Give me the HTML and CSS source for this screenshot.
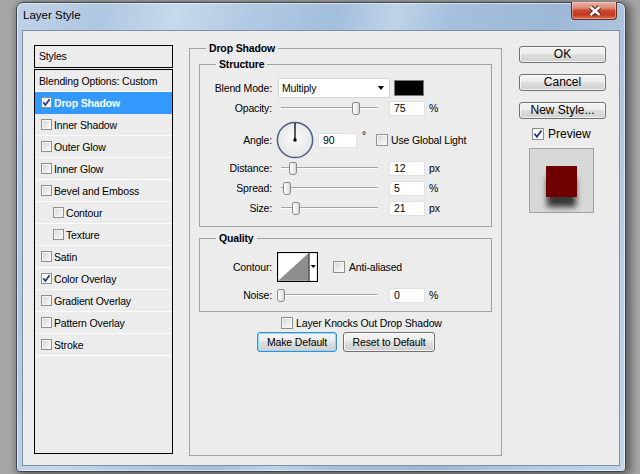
FILE: index.html
```html
<!DOCTYPE html>
<html>
<head>
<meta charset="utf-8">
<title>Layer Style</title>
<link rel="stylesheet" href="styles.css">
</head>
<body>
<div class="window">
  <div class="titlebar">
    <span class="title">Layer Style</span>
    <div class="close">
      <svg width="46" height="18" viewBox="0 0 46 18"><path d="M18.5 5 L27.5 13 M27.5 5 L18.5 13" stroke="#4a2019" stroke-width="4.4"/><path d="M18.5 5 L27.5 13 M27.5 5 L18.5 13" stroke="#ffffff" stroke-width="2.4"/></svg>
    </div>
  </div>
  <div class="client">
    <div class="styles-col">
      <div class="styles-head">Styles</div>
      <ul class="styles-list">
        <li class="row plain">Blending Options: Custom</li>
        <li class="row sel"><span class="cb small on"><svg width="9" height="9" viewBox="0 0 9 9"><path d="M1.3 4.3 L3.4 7 L7.6 1.3" fill="none" stroke="#22397f" stroke-width="1.7"/></svg></span>Drop Shadow</li>
        <li class="row"><span class="cb small"></span>Inner Shadow</li>
        <li class="row"><span class="cb small"></span>Outer Glow</li>
        <li class="row"><span class="cb small"></span>Inner Glow</li>
        <li class="row"><span class="cb small"></span>Bevel and Emboss</li>
        <li class="row indent"><span class="cb small"></span>Contour</li>
        <li class="row indent"><span class="cb small"></span>Texture</li>
        <li class="row"><span class="cb small"></span>Satin</li>
        <li class="row"><span class="cb small on"><svg width="9" height="9" viewBox="0 0 9 9"><path d="M1.3 4.3 L3.4 7 L7.6 1.3" fill="none" stroke="#22397f" stroke-width="1.7"/></svg></span>Color Overlay</li>
        <li class="row"><span class="cb small"></span>Gradient Overlay</li>
        <li class="row"><span class="cb small"></span>Pattern Overlay</li>
        <li class="row"><span class="cb small"></span>Stroke</li>
      </ul>
    </div>

    <fieldset class="group main">
      <legend>Drop Shadow</legend>
      <fieldset class="group sub structure">
        <legend>Structure</legend>
        <div class="frow r-blend">
          <span class="lbl">Blend Mode:</span>
          <div class="select"><span>Multiply</span><span class="arrow"></span></div>
          <span class="swatch"></span>
        </div>
        <div class="frow r-opacity">
          <span class="lbl">Opacity:</span>
          <div class="slider"><span class="track"></span><span class="thumb" style="left:75px"></span></div>
          <span class="field">75</span><span class="unit">%</span>
        </div>
        <div class="frow r-angle">
          <span class="lbl">Angle:</span>
          <svg class="dial" width="38" height="38" viewBox="0 0 38 38">
            <defs><radialGradient id="dg" cx="50%" cy="45%" r="60%"><stop offset="0" stop-color="#fbfbfb"/><stop offset="1" stop-color="#e2e2e2"/></radialGradient></defs>
            <circle cx="19" cy="19" r="17.6" fill="url(#dg)" stroke="#4d5e83" stroke-width="1.5"/>
            <line x1="19" y1="19" x2="19" y2="2" stroke="#000" stroke-width="1.3"/>
            <rect x="17.5" y="17.5" width="3" height="3" fill="#000"/>
          </svg>
          <span class="field angle-field">90</span>
          <span class="deg">°</span>
          <span class="cb"></span><span class="cb-text">Use Global Light</span>
        </div>
        <div class="frow r-distance">
          <span class="lbl">Distance:</span>
          <div class="slider"><span class="track"></span><span class="thumb" style="left:12px"></span></div>
          <span class="field">12</span><span class="unit">px</span>
        </div>
        <div class="frow r-spread">
          <span class="lbl">Spread:</span>
          <div class="slider"><span class="track"></span><span class="thumb" style="left:6px"></span></div>
          <span class="field">5</span><span class="unit">%</span>
        </div>
        <div class="frow r-size">
          <span class="lbl">Size:</span>
          <div class="slider"><span class="track"></span><span class="thumb" style="left:15px"></span></div>
          <span class="field">21</span><span class="unit">px</span>
        </div>
      </fieldset>

      <fieldset class="group sub quality">
        <legend>Quality</legend>
        <div class="frow r-contour">
          <span class="lbl">Contour:</span>
          <svg class="contour" width="41" height="30" viewBox="0 0 41 30">
            <rect x="0.5" y="0.5" width="40" height="29" fill="#ffffff" stroke="#000" stroke-width="1.2"/>
            <polygon points="1.2,28.8 31.5,1.2 31.5,28.8" fill="#8e8e8e"/>
            <line x1="32" y1="0" x2="32" y2="30" stroke="#000" stroke-width="1"/>
            <polygon points="33.8,13 38.8,13 36.3,16" fill="#000"/>
          </svg>
          <span class="cb aa"></span><span class="cb-text">Anti-aliased</span>
        </div>
        <div class="frow r-noise">
          <span class="lbl">Noise:</span>
          <div class="slider"><span class="track"></span><span class="thumb" style="left:0px"></span></div>
          <span class="field">0</span><span class="unit">%</span>
        </div>
      </fieldset>

      <div class="knock"><span class="cb"></span><span class="cb-text">Layer Knocks Out Drop Shadow</span></div>
      <div class="defaults">
        <button class="btn focus make">Make Default</button>
        <button class="btn reset">Reset to Default</button>
      </div>
    </fieldset>

    <div class="right-col">
      <button class="btn big">OK</button>
      <button class="btn big">Cancel</button>
      <button class="btn big">New Style...</button>
      <div class="preview-check"><span class="cb on"><svg width="10" height="10" viewBox="0 0 10 10"><path d="M1.5 4.8 L3.9 7.8 L8.5 1.5" fill="none" stroke="#22397f" stroke-width="1.8"/></svg></span><span class="pv-text">Preview</span></div>
      <div class="preview-box"><div class="preview-square"></div></div>
    </div>
  </div>
</div>
</body>
</html>
```

FILE: styles.css
```css
* { box-sizing: border-box; }
html, body { margin: 0; padding: 0; }
body {
  width: 640px;
  height: 474px;
  overflow: hidden;
  background: #a7a7a7;
  font-family: "Liberation Sans", Arial, sans-serif;
  font-size: 10.5px;
  letter-spacing: -0.15px;
  color: #000;
}

.window {
  margin: 2px 0 0 16px;
  width: 610px;
  height: 470px;
  border: 1px solid #3f4650;
  border-radius: 7px 7px 4px 4px;
  background: linear-gradient(105deg, #bfd2e7 0%, #afc7e0 12%, #c7d9ec 22%, #b2c9e2 32%, #a3bedb 44%, #bfd3e8 52%, #a5bfdc 60%, #9db8d6 74%, #b3cae2 88%, #c3d6ea 100%);
  padding: 0 5px 5px 5px;
  display: flex;
  flex-direction: column;
  box-shadow: inset 0 0 0 1px rgba(255,255,255,0.55), 3px 2px 10px 2px rgba(0,0,0,0.45);
}

.titlebar {
  height: 27px;
  display: flex;
  justify-content: space-between;
  align-items: flex-start;
  flex: none;
}
.title {
  font-size: 11.5px;
  letter-spacing: 0;
  line-height: 14px;
  margin: 5px 0 0 1px;
  color: #000;
}
.close {
  width: 46px;
  height: 18px;
  margin: -1px 3px 0 0;
  border: 1px solid #6a2a20;
  border-top: none;
  border-radius: 0 0 4px 4px;
  background: linear-gradient(#eab0a3 0%, #dd8a76 35%, #c94a33 50%, #c0391f 75%, #d9714f 100%);
  box-shadow: inset 0 0 0 1px rgba(255,220,210,0.45);
}
.close svg { display: block; }

.client {
  flex: 1;
  background: #ececec;
  border: 1px solid #7d91ab;
  display: flex;
  align-items: flex-start;
}

/* Styles column */
.styles-col {
  width: 139px;
  margin: 14px 0 0 11px;
  flex: none;
}
.styles-head {
  height: 23px;
  border: 1px solid #000;
  padding-left: 4px;
  line-height: 21px;
  margin-bottom: 1px;
}
.styles-list {
  list-style: none;
  margin: 0;
  padding: 0;
  height: 385px;
  border: 1px solid #000;
}
.row {
  height: 22px;
  border-bottom: 1px solid #fbfbfb;
  display: flex;
  align-items: center;
  padding-left: 6px;
}
.row.plain { padding-left: 4px; }
.row.indent { padding-left: 18px; }
.row .cb { margin-right: 2px; }
.row.sel {
  background: #3399ff;
  border-bottom-color: #3399ff;
  color: #fff;
  font-weight: bold;
}

/* checkbox */
.cb {
  width: 12px;
  height: 12px;
  flex: none;
  border: 1px solid #8e8f8f;
  background: linear-gradient(135deg, #d2d2d2 0%, #eeeeee 60%, #fafafa 100%);
  box-shadow: inset 0 0 0 1px #f6f6f6;
  display: flex;
  align-items: center;
  justify-content: center;
}
.cb.small { width: 11px; height: 11px; }
.cb.on { background: #fdfdfd; }
.cb svg { display: block; }
.cb-text { margin-left: 3px; }

/* group boxes */
.group {
  margin: 0;
  border: 1px solid #a3a3a3;
  min-inline-size: 0;
}
.group > legend {
  font-weight: bold;
  line-height: 13px;
  padding: 0 3px;
}
.main {
  width: 313px;
  height: 414px;
  margin: 11px 0 0 16px;
  padding: 0 9px;
  flex: none;
}
.main > legend { margin-left: 7px; }
.sub { padding: 0; width: 293px; }
.sub > legend { margin-left: 16px; }
.structure { height: 169px; margin-top: 3px; }
.quality { height: 80px; margin-top: 5px; }

.frow {
  display: flex;
  align-items: center;
  height: 16px;
}
.lbl {
  width: 72px;
  flex: none;
  text-align: right;
}
.r-blend { height: 20px; margin-top: 7px; }
.r-opacity { margin-top: 2px; }
.r-angle { height: 40px; margin-top: 4px; }
.r-distance { margin-top: 0; }
.r-spread { margin-top: 4px; }
.r-size { margin-top: 4px; }
.r-contour { height: 30px; margin-top: 7px; }
.r-noise { margin-top: 5px; }

.select {
  width: 112px;
  height: 20px;
  margin-left: 6px;
  background: #fff;
  border: 1px solid #d6d6d6;
  display: flex;
  align-items: center;
  justify-content: space-between;
  padding: 0 5px 0 3px;
}
.arrow {
  width: 0;
  height: 0;
  border-left: 3.5px solid transparent;
  border-right: 3.5px solid transparent;
  border-top: 4px solid #000;
}
.swatch {
  width: 30px;
  height: 16px;
  margin-left: 4px;
  background: #000;
  border: 1px solid #7a7a7a;
}

.slider {
  position: relative;
  width: 105px;
  height: 16px;
  margin-left: 5px;
  flex: none;
}
.track {
  display: block;
  height: 2px;
  margin: 7px 4px 0;
  border-top: 1px solid #a2a2a2;
  border-bottom: 1px solid #ffffff;
}
.thumb {
  position: absolute;
  top: 2px;
  width: 8px;
  height: 13px;
  border: 1px solid #8a8a8a;
  border-radius: 2px 2px 3px 3px;
  background: linear-gradient(90deg, #ffffff 0%, #ececec 60%, #d4d4d4 100%);
}
.field {
  width: 36px;
  height: 15px;
  margin-left: 7px;
  background: #fff;
  border: 1px solid #e0e0e0;
  padding-left: 4px;
  line-height: 13px;
  flex: none;
}
.unit { margin-left: 4px; }

.dial { margin-left: 4px; flex: none; display: block; }
.angle-field { width: 39px; margin-left: 4px; }
.deg {
  width: 14px;
  margin-left: 5px;
  align-self: flex-start;
  margin-top: 9px;
  flex: none;
}

.contour { margin-left: 5px; flex: none; display: block; }
.cb.aa { margin-left: 15px; }
.r-contour .cb-text { margin-left: 4px; }

.knock {
  display: flex;
  align-items: center;
  height: 13px;
  margin: 4px 0 0 82px;
}
.defaults {
  display: flex;
  gap: 6px;
  margin: 3px 0 0 58px;
}

/* buttons */
.btn {
  font-family: "Liberation Sans", Arial, sans-serif;
  font-size: 10.5px;
  letter-spacing: -0.15px;
  color: #000;
  padding: 0;
  border: 1px solid #707070;
  border-radius: 3px;
  background: linear-gradient(#f4f4f4 0%, #ececec 45%, #dedede 50%, #d0d0d0 100%);
  box-shadow: inset 0 0 0 1px rgba(255,255,255,0.75);
  display: block;
}
.make { width: 80px; height: 20px; }
.reset { width: 92px; height: 20px; }
.btn.focus {
  border-color: #3c8fcb;
  box-shadow: inset 0 0 0 1px #8fd6f7;
}

.right-col {
  width: 87px;
  margin: 15px 0 0 17px;
  flex: none;
  display: flex;
  flex-direction: column;
}
.btn.big {
  width: 87px;
  height: 17px;
  font-size: 12px;
  letter-spacing: 0;
  line-height: 15px;
}
.btn.big + .btn.big { margin-top: 11px; }
.preview-check {
  display: flex;
  align-items: center;
  height: 12px;
  margin: 9px 0 0 13px;
}
.pv-text { margin-left: 4px; font-size: 12px; letter-spacing: 0; }
.preview-box {
  width: 65px;
  height: 65px;
  margin: 8px 0 0 10px;
  background: #d8d8d8;
  border: 1px solid #a2a2a2;
  padding: 17px 0 0 16px;
}
.preview-square {
  width: 31px;
  height: 31px;
  background: #6e0000;
  box-shadow: 0 11px 6px -1px rgba(0,0,0,0.75);
}
```
